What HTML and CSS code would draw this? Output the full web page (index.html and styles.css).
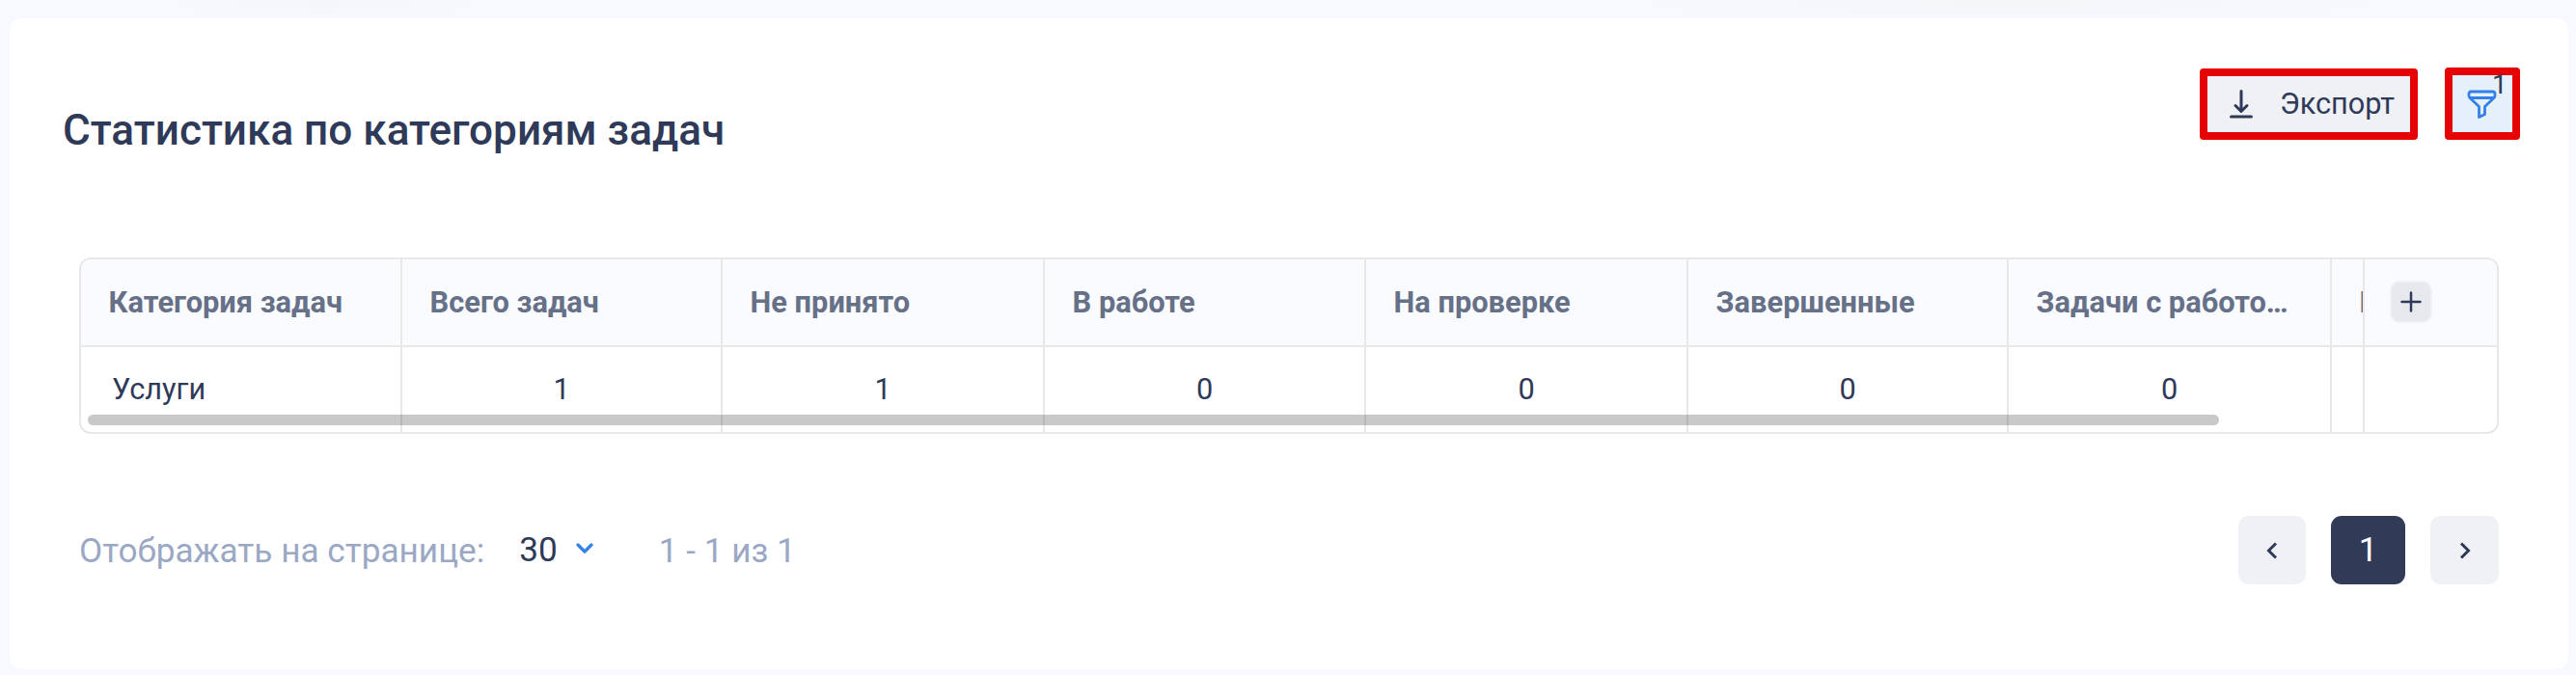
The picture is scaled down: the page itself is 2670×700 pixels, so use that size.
FILE: index.html
```html
<!DOCTYPE html>
<html lang="ru">
<head>
<meta charset="utf-8">
<title>Статистика по категориям задач</title>
<link rel="stylesheet" href="styles.css">
</head>
<body>
<main class="card">
  <header class="head">
    <h1 class="title">Статистика по категориям задач</h1>
    <div class="actions">
      <button class="btn export">
        <svg width="26" height="32" viewBox="0 0 26 32" fill="none" stroke="#2f3a58" stroke-width="3" stroke-linecap="round" stroke-linejoin="round"><path d="M13 2.500V23M7 17.500L13 23.500L19 17.500M2.500 29H23.500"/></svg>
        <span>Экспорт</span>
      </button>
      <button class="btn filter">
        <svg width="32" height="32" viewBox="0 0 32 32" fill="none" stroke="#3380e8" stroke-width="2.800" stroke-linejoin="round"><path d="M5 3H27.500Q30 3 30 5.500V7Q30 8.500 29 9.500L19.500 18.500V26.500L13.500 29.500V18.500L4 9.500Q3 8.500 3 7V5.500Q3 3 5 3ZM4 9.500H29"/></svg>
        <span class="count">1</span>
      </button>
    </div>
  </header>
  <section class="table">
    <div class="row row-head">
      <div class="cell">Категория задач</div>
      <div class="cell">Всего задач</div>
      <div class="cell">Не принято</div>
      <div class="cell">В работе</div>
      <div class="cell">На проверке</div>
      <div class="cell">Завершенные</div>
      <div class="cell">Задачи с работо…</div>
      <div class="cell">П</div>
      <div class="cell last"><button class="add"><svg width="22" height="22" viewBox="0 0 22 22" stroke="#2f3a58" stroke-width="2.500" stroke-linecap="round"><path d="M11 1.500V20.500M1.500 11H20.500"/></svg></button></div>
    </div>
    <div class="row row-body">
      <div class="cell name">Услуги</div>
      <div class="cell">1</div>
      <div class="cell">1</div>
      <div class="cell">0</div>
      <div class="cell">0</div>
      <div class="cell">0</div>
      <div class="cell">0</div>
      <div class="cell"></div>
      <div class="cell last"></div>
    </div>
    <div class="scrollbar"></div>
  </section>
  <footer class="foot">
    <span class="label">Отображать на странице:</span>
    <span class="size">30</span>
    <svg class="chev" width="20" height="14" viewBox="0 0 20 14" fill="none" stroke="#3380e8" stroke-width="3.200" stroke-linecap="round" stroke-linejoin="round"><path d="M3 3L10 10L17 3"/></svg>
    <span class="range">1 - 1 из 1</span>
    <nav class="pages">
      <button class="page prev"><svg width="12" height="18" viewBox="0 0 12 18" fill="none" stroke="#2f3a58" stroke-width="3"><path d="M10 1.500L2.500 9L10 16.500"/></svg></button>
      <button class="page current">1</button>
      <button class="page"><svg width="12" height="18" viewBox="0 0 12 18" fill="none" stroke="#2f3a58" stroke-width="3"><path d="M2 1.500L9.500 9L2 16.500"/></svg></button>
    </nav>
  </footer>
</main>
</body>
</html>
```
FILE: styles.css
```css
* { box-sizing: border-box; }
body {
  margin: 0;
  height: 700px;
  padding: 19px 8px 6px 10px;
  overflow: hidden;
  background:
    radial-gradient(ellipse 160px 20px at 335px 0, #f5f6f9, transparent),
    radial-gradient(ellipse 380px 26px at 2080px 0, #f5f6f8, transparent),
    #f8f9fe;
  font-family: Roboto, "Liberation Sans", sans-serif;
  color: #2f3a58;
}
button { border: 0; padding: 0; margin: 0; font: inherit; color: inherit; background: none; }
.card {
  height: 675px;
  padding: 51px 50px 0 55px;
  border-radius: 12px;
  background: #fff;
}
.head { display: flex; justify-content: space-between; height: 197px; }
.title { margin: 40px 0 0; font-size: 44.1px; line-height: 50px; font-weight: 500; white-space: nowrap; }
.actions { display: flex; gap: 28px; }
.btn { display: flex; align-items: center; border: 8px solid #e60303; border-radius: 4px; }
.export {
  width: 226px;
  height: 74px;
  margin-top: 1px;
  padding-left: 22px;
  gap: 27px;
  background: #f0f1f5;
  font-size: 30.7px;
  line-height: 38px;
}
.filter { position: relative; width: 78px; height: 75px; padding-left: 14px; background: #e6f0fa; }
.count { position: absolute; left: 41px; top: -5px; font-size: 28px; line-height: 30px; }
.table {
  position: relative;
  width: 2508px;
  height: 183px;
  margin-left: 17px;
  border: 2px solid #e8e8e8;
  border-radius: 12px;
  overflow: hidden;
}
.row { display: grid; grid-template-columns: 333px 332px 334px 333px 334px 332px 335px 34px 137px; }
.cell { border-right: 2px solid #e8e8e8; overflow: hidden; white-space: nowrap; }
.last { border-right: 0; }
.row-head { height: 91px; background: #fafbff; border-bottom: 2px solid #e8e8e8; color: #667087; }
.row-head .cell { padding: 25px 0 0 28.6px; font-size: 30.8px; line-height: 40px; font-weight: 700; }
.row-body { height: 88px; }
.row-body .cell { padding-top: 24px; font-size: 30.7px; line-height: 40px; text-align: center; }
.row-body .name { padding-left: 32px; text-align: left; }
.row-head .last { padding: 22px 0 0 26px; }
.add {
  display: flex;
  align-items: center;
  justify-content: center;
  width: 44px;
  height: 44px;
  border: 2px solid #f0f1f5;
  border-radius: 10px;
  background: #e8e9ed;
}
.scrollbar { position: absolute; left: 7px; top: 161px; width: 2209px; height: 11px; border-radius: 6px; background: rgba(0, 0, 0, .21); }
.foot { display: flex; align-items: flex-start; margin: 85px 22px 0 17px; font-size: 35.2px; line-height: 40px; white-space: nowrap; }
.label, .range { margin-top: 16px; color: #9ba8c4; }
.size { margin: 15px 0 0 36px; }
.chev { margin: 27px 0 0 18px; }
.range { margin-left: 67px; }
.pages { display: flex; gap: 26px; margin-left: auto; }
.page { display: flex; align-items: center; justify-content: center; width: 71px; height: 71px; border-radius: 11px; background: #f0f1f5; }
.page.prev { width: 70px; }
.page.current { width: 77px; background: #313a57; color: #fff; font-size: 35px; }
```
